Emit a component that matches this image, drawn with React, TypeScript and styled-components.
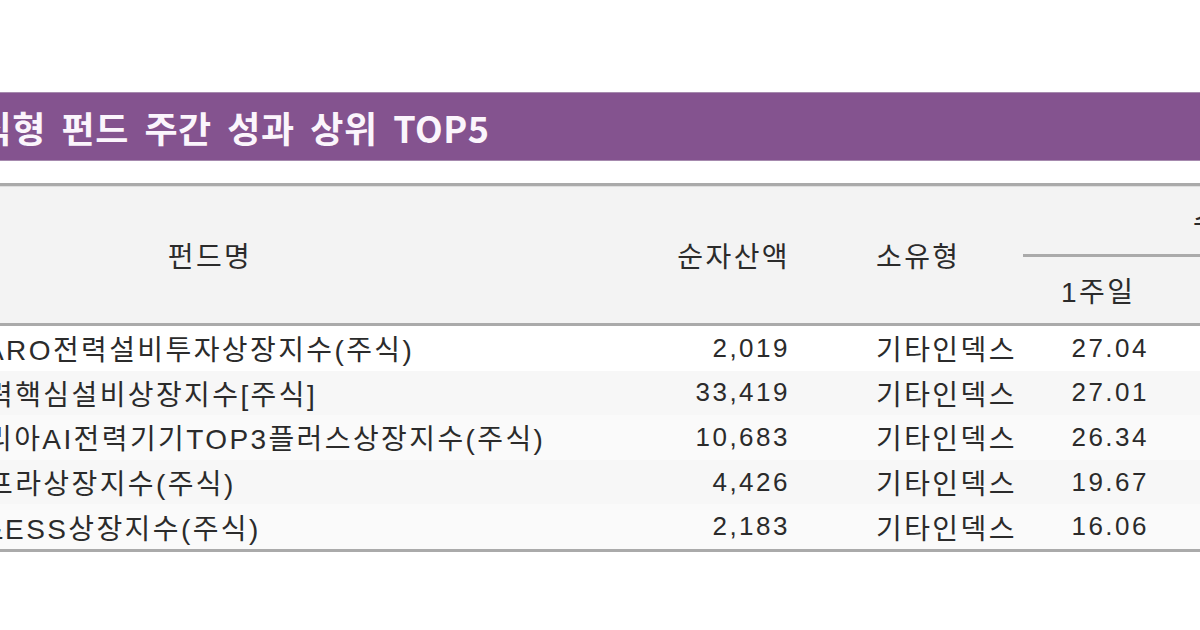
import React from "react";
import styled, { createGlobalStyle } from "styled-components";

const GlobalStyle = createGlobalStyle`
  html, body {
    margin: 0;
    padding: 0;
    background: #ffffff;
    width: 1200px;
    height: 630px;
    overflow: hidden;
  }
  * { box-sizing: border-box; }
`;

const COLS = "420px 370px 233px 1fr";

const Page = styled.div`
  width: 1200px;
  height: 630px;
  padding-top: 92px;
  overflow: hidden;
  font-family: "Liberation Sans", "Noto Sans CJK KR", sans-serif;
  color: #2b2b2b;
`;

const TitleBar = styled.div`
  height: 69px;
  background: #84538f;
  border-top: 1px solid #a68aae;
  border-bottom: 1px solid #a68aae;
  display: flex;
  align-items: center;
  overflow: hidden;
`;

const Title = styled.h1`
  margin: 0 0 0 -55px;
  font-family: "Noto Sans CJK KR", sans-serif;
  font-weight: 700;
  font-size: 36px;
  letter-spacing: 0.5px;
  word-spacing: 7px;
  color: #fbf5fc;
  white-space: nowrap;
`;

const Table = styled.div`
  margin-top: 22px;
  border-top: 3px solid #aaaaaa;
  border-bottom: 3px solid #aaaaaa;
  font-size: 28px;
  letter-spacing: 2.4px;
`;

const Header = styled.div`
  display: grid;
  grid-template-columns: ${COLS};
  grid-template-rows: 68px 3px 66px;
  background: #f3f3f3;
  border-bottom: 3px solid #aaaaaa;
  box-shadow: inset 0 1px 0 #dedede;
`;

const HeadCell = styled.div<{ $align?: "left" | "center" | "right"; $pad?: number }>`
  grid-row: 1 / 4;
  display: flex;
  align-items: center;
  justify-content: ${(p) =>
    p.$align === "right" ? "flex-end" : p.$align === "left" ? "flex-start" : "center"};
  padding-left: ${(p) => p.$pad ?? 0}px;
  white-space: nowrap;
`;

const GroupHead = styled.div`
  grid-column: 4;
  grid-row: 1;
  display: flex;
  align-items: center;
  padding-left: 170px;
  white-space: nowrap;
`;

const GroupLine = styled.div`
  grid-column: 4;
  grid-row: 2;
  background: #aaaaaa;
`;

const SubHead = styled.div`
  grid-column: 4;
  grid-row: 3;
  display: flex;
  align-items: center;
  padding-left: 38px;
  white-space: nowrap;
`;

const Row = styled.div<{ $shade: string }>`
  display: grid;
  grid-template-columns: ${COLS};
  height: 44.6px;
  align-items: center;
  background: ${(p) => p.$shade};
`;

const NameCell = styled.div<{ $shift: number }>`
  margin-left: ${(p) => p.$shift}px;
  white-space: nowrap;
`;

const NumCell = styled.div<{ $padRight?: number }>`
  text-align: right;
  font-size: 26px;
  letter-spacing: 2.5px;
  padding-right: ${(p) => p.$padRight ?? 0}px;
  white-space: nowrap;
`;

const TypeCell = styled.div`
  padding-left: 86px;
  white-space: nowrap;
`;

type Fund = { name: string; shift: number; nav: string; type: string; week: string; shade: string };

const funds: Fund[] = [
  { name: "ARO전력설비투자상장지수(주식)", shift: -15, nav: "2,019", type: "기타인덱스", week: "27.04", shade: "#ffffff" },
  { name: "력핵심설비상장지수[주식]", shift: -13, nav: "33,419", type: "기타인덱스", week: "27.01", shade: "#f7f7f7" },
  { name: "리아AI전력기기TOP3플러스상장지수(주식)", shift: -14, nav: "10,683", type: "기타인덱스", week: "26.34", shade: "#fafafa" },
  { name: "프라상장지수(주식)", shift: -13, nav: "4,426", type: "기타인덱스", week: "19.67", shade: "#f7f7f7" },
  { name: "&ESS상장지수(주식)", shift: -16, nav: "2,183", type: "기타인덱스", week: "16.06", shade: "#fafafa" },
];

export default function App() {
  return (
    <Page>
      <GlobalStyle />
      <TitleBar>
        <Title>주식형 펀드 주간 성과 상위 TOP5</Title>
      </TitleBar>
      <Table>
        <Header>
          <HeadCell $align="center">펀드명</HeadCell>
          <HeadCell $align="right">순자산액</HeadCell>
          <HeadCell $align="left" $pad={86}>소유형</HeadCell>
          <GroupHead>수익률(%)</GroupHead>
          <GroupLine />
          <SubHead>1주일</SubHead>
        </Header>
        {funds.map((f) => (
          <Row key={f.name} $shade={f.shade}>
            <NameCell $shift={f.shift}>{f.name}</NameCell>
            <NumCell>{f.nav}</NumCell>
            <TypeCell>{f.type}</TypeCell>
            <NumCell $padRight={51}>{f.week}</NumCell>
          </Row>
        ))}
      </Table>
    </Page>
  );
}
